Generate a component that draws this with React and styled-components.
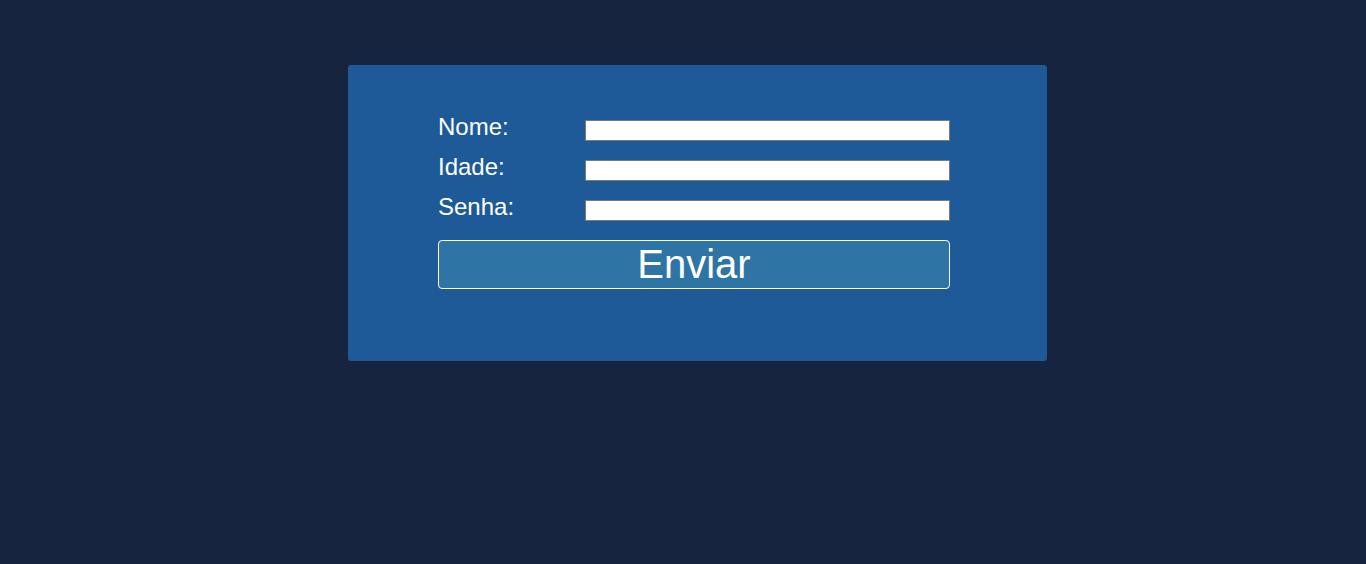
import styled, { createGlobalStyle } from "styled-components";

const Global = createGlobalStyle`
  html, body {
    margin: 0;
    padding: 0;
    background: #172440;
    font-family: "Liberation Sans", Arial, sans-serif;
  }
  * { box-sizing: border-box; }
`;

const Page = styled.div`
  min-height: 564px;
  padding: 65px 0 0 348px;
`;

const Card = styled.form`
  width: 699px;
  height: 296px;
  background: #1e5a97;
  border-radius: 3px;
  padding: 47px 97px 72px 90px;
  display: flex;
  flex-direction: column;
`;

const Row = styled.div`
  display: grid;
  grid-template-columns: 147px 365px;
  align-items: start;
  height: 40px;
`;

const Label = styled.label`
  color: #fff;
  font-size: 24px;
  line-height: 27px;
  padding-top: 1px;
`;

const Input = styled.input`
  width: 365px;
  height: 21px;
  margin: 8px 0 0;
  padding: 0 2px;
  border: 1px solid #7a7a7a;
  background: #fff;
  font-size: 13px;
  outline: none;
`;

const Button = styled.button`
  margin-top: 8px;
  width: 512px;
  height: 49px;
  padding: 0;
  border: 1px solid #fff;
  border-radius: 4px;
  background: #2e75a6;
  color: #fff;
  font-family: "Liberation Sans", Arial, sans-serif;
  font-size: 40px;
  line-height: 47px;
  cursor: pointer;
`;

const fields = ["Nome:", "Idade:", "Senha:"];

export default function App() {
  return (
    <Page>
      <Global />
      <Card onSubmit={(e) => e.preventDefault()}>
        {fields.map((f) => (
          <Row key={f}>
            <Label>{f}</Label>
            <Input type={f === "Senha:" ? "password" : "text"} />
          </Row>
        ))}
        <Button type="submit">Enviar</Button>
      </Card>
    </Page>
  );
}
